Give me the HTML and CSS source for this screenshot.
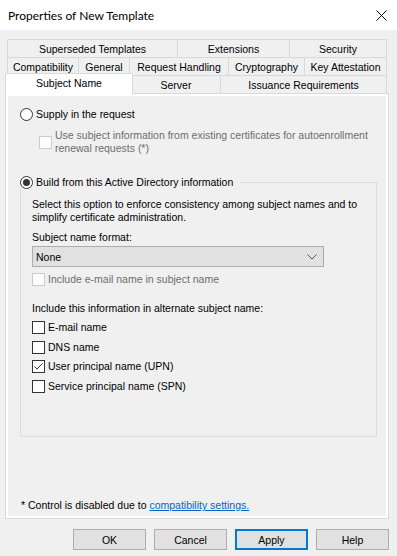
FILE: index.html
```html
<!doctype html>
<html lang="en">
<head>
  <meta charset="UTF-8"/>
  <title>Properties of New Template</title>
  <link rel="stylesheet" href="styles.css">
</head>
<body>
  <div class="window">
    <div class="titlebar">
      <span class="title">Properties of New Template</span>
      <svg class="close" width="11" height="11" viewBox="0 0 11 11">
        <path d="M0.5 0.5 L10.5 10.5 M10.5 0.5 L0.5 10.5" stroke="#000" stroke-width="1" fill="none"/>
      </svg>
    </div>

    <div class="tabs">
      <div class="tab-row row-1">
        <div class="tab">Superseded Templates</div>
        <div class="tab">Extensions</div>
        <div class="tab last">Security</div>
      </div>
      <div class="tab-row row-2">
        <div class="tab">Compatibility</div>
        <div class="tab">General</div>
        <div class="tab">Request Handling</div>
        <div class="tab">Cryptography</div>
        <div class="tab last">Key Attestation</div>
      </div>
      <div class="tab-row row-3">
        <div class="tab selected">Subject Name</div>
        <div class="tab">Server</div>
        <div class="tab last">Issuance Requirements</div>
      </div>
    </div>

    <div class="page">
      <div class="sheet">
        <div class="option">
          <span class="radio"></span>
          <span>Supply in the request</span>
        </div>
        <div class="option sub disabled">
          <span class="box"></span>
          <span class="wrap">Use subject information from existing certificates for autoenrollment<br>renewal requests (*)</span>
        </div>

        <div class="group">
          <div class="group-title">
            <span class="radio on"></span>
            <span>Build from this Active Directory information</span>
          </div>
          <p class="desc">Select this option to enforce consistency among subject names and to<br>simplify certificate administration.</p>
          <div class="label">Subject name format:</div>
          <div class="select">
            <span>None</span>
            <svg width="10" height="6" viewBox="0 0 10 6">
              <path d="M0.5 0.5 L5 5 L9.5 0.5" stroke="#555" stroke-width="1" fill="none"/>
            </svg>
          </div>
          <div class="option disabled email">
            <span class="box"></span>
            <span>Include e-mail name in subject name</span>
          </div>
          <div class="label alt">Include this information in alternate subject name:</div>
          <div class="checks">
            <div class="option">
              <span class="box"></span>
              <span>E-mail name</span>
            </div>
            <div class="option">
              <span class="box"></span>
              <span>DNS name</span>
            </div>
            <div class="option">
              <span class="box">
                <svg width="11" height="11" viewBox="0 0 11 11">
                  <path d="M1.5 5.5 L4 8 L9.5 2.5" stroke="#333" stroke-width="1" fill="none"/>
                </svg>
              </span>
              <span>User principal name (UPN)</span>
            </div>
            <div class="option">
              <span class="box"></span>
              <span>Service principal name (SPN)</span>
            </div>
          </div>
        </div>

        <div class="note">* Control is disabled due to <a href="#">compatibility settings.</a></div>
      </div>
    </div>

    <div class="buttons">
      <button class="btn">OK</button>
      <button class="btn">Cancel</button>
      <button class="btn default">Apply</button>
      <button class="btn">Help</button>
    </div>
  </div>
</body>
</html>
```

FILE: styles.css
```css
body {
  margin: 0;
  padding: 0;
  background: #f0f0f0;
  font-family: 'Liberation Sans', Arial, sans-serif;
  font-size: 10.5px;
  color: #000;
}

.window {
  width: 397px;
  height: 556px;
  display: flex;
  flex-direction: column;
  white-space: nowrap;
}

.titlebar {
  height: 30px;
  background: #fff;
  display: flex;
  align-items: center;
  justify-content: space-between;
  padding: 0 10px 0 8px;
  box-sizing: border-box;
}

.title {
  font-family: Lato, 'Liberation Sans', sans-serif;
  font-size: 12px;
}

/* tab rows */
.tabs {
  margin: 9px 10px 0 7px;
}

.tab-row {
  display: grid;
  height: 18px;
}

.row-1 { grid-template-columns: 170px 112px 98px; }
.row-2 { grid-template-columns: 71px 51px 99px 76px 83px; }
.row-3 { grid-template-columns: 124px 89px 167px; }

.tab {
  border-top: 1px solid #d9d9d9;
  border-left: 1px solid #d9d9d9;
  background: #f0f0f0;
  text-align: center;
  padding-top: 1px;
  line-height: 16px;
}

.tab.last {
  border-right: 1px solid #d9d9d9;
}

.tab.selected {
  margin: -2px -2px -1px -2px;
  border-right: 1px solid #d9d9d9;
  background: #fff;
  z-index: 1;
}

/* tab page */
.page {
  margin: 0 8px 0 5px;
  height: 426px;
  border: 1px solid #d9d9d9;
  background: #fff;
  padding: 2px;
  box-sizing: border-box;
  display: flex;
}

.sheet {
  flex: 1;
  min-width: 0;
  background: #f0f0f0;
  padding: 12px 9px 4px 12px;
  display: flex;
  flex-direction: column;
}

.option {
  display: flex;
  align-items: center;
  gap: 3px;
  line-height: 13px;
}

.option.sub {
  margin: 8px 0 0 19px;
}

.disabled {
  color: #6d6d6d;
}

.radio {
  width: 13px;
  height: 13px;
  border: 1px solid #333;
  border-radius: 50%;
  background: #fff;
  box-sizing: border-box;
  display: flex;
  align-items: center;
  justify-content: center;
  flex-shrink: 0;
}

.radio.on::after {
  content: "";
  width: 7px;
  height: 7px;
  border-radius: 50%;
  background: #333;
}

.box {
  width: 13px;
  height: 13px;
  border: 1px solid #333;
  background: #fff;
  box-sizing: border-box;
  display: flex;
  align-items: center;
  justify-content: center;
  flex-shrink: 0;
}

.disabled .box {
  border-color: #cccccc;
  background: #fcfcfc;
}

/* group box */
.group {
  margin-top: 27px;
  height: 255px;
  border: 1px solid #dcdcdc;
  box-sizing: border-box;
  padding: 0 0 0 11px;
}

.group-title {
  display: flex;
  align-items: center;
  gap: 3px;
  width: fit-content;
  margin: -7px 0 0 -12px;
  padding-right: 7px;
  background: #f0f0f0;
  line-height: 13px;
}

.desc {
  margin: 9px 0 0 0;
  line-height: 13px;
}

.label {
  margin-top: 7px;
  line-height: 13px;
}

.label.alt {
  margin-top: 16px;
}

.select {
  margin-top: 2px;
  width: 292px;
  height: 21px;
  border: 1px solid #adadad;
  background: #e1e1e1;
  box-sizing: border-box;
  display: flex;
  align-items: center;
  justify-content: space-between;
  padding: 0 6px 0 3px;
}

.option.email {
  margin-top: 6px;
}

.checks {
  margin-top: 6px;
  display: flex;
  flex-direction: column;
  gap: 6.5px;
}

.note {
  margin-top: auto;
  padding-left: 1px;
  line-height: 13px;
}

.note a {
  color: #0066cc;
}

/* dialog buttons */
.buttons {
  display: flex;
  justify-content: flex-end;
  gap: 8px;
  margin: 10px 8px 0 0;
}

.btn {
  width: 73px;
  height: 21px;
  border: 1px solid #adadad;
  background: #e1e1e1;
  font-family: inherit;
  font-size: 10.5px;
  color: #000;
  padding: 0;
}

.btn.default {
  border: 2px solid #0078d7;
}
```
